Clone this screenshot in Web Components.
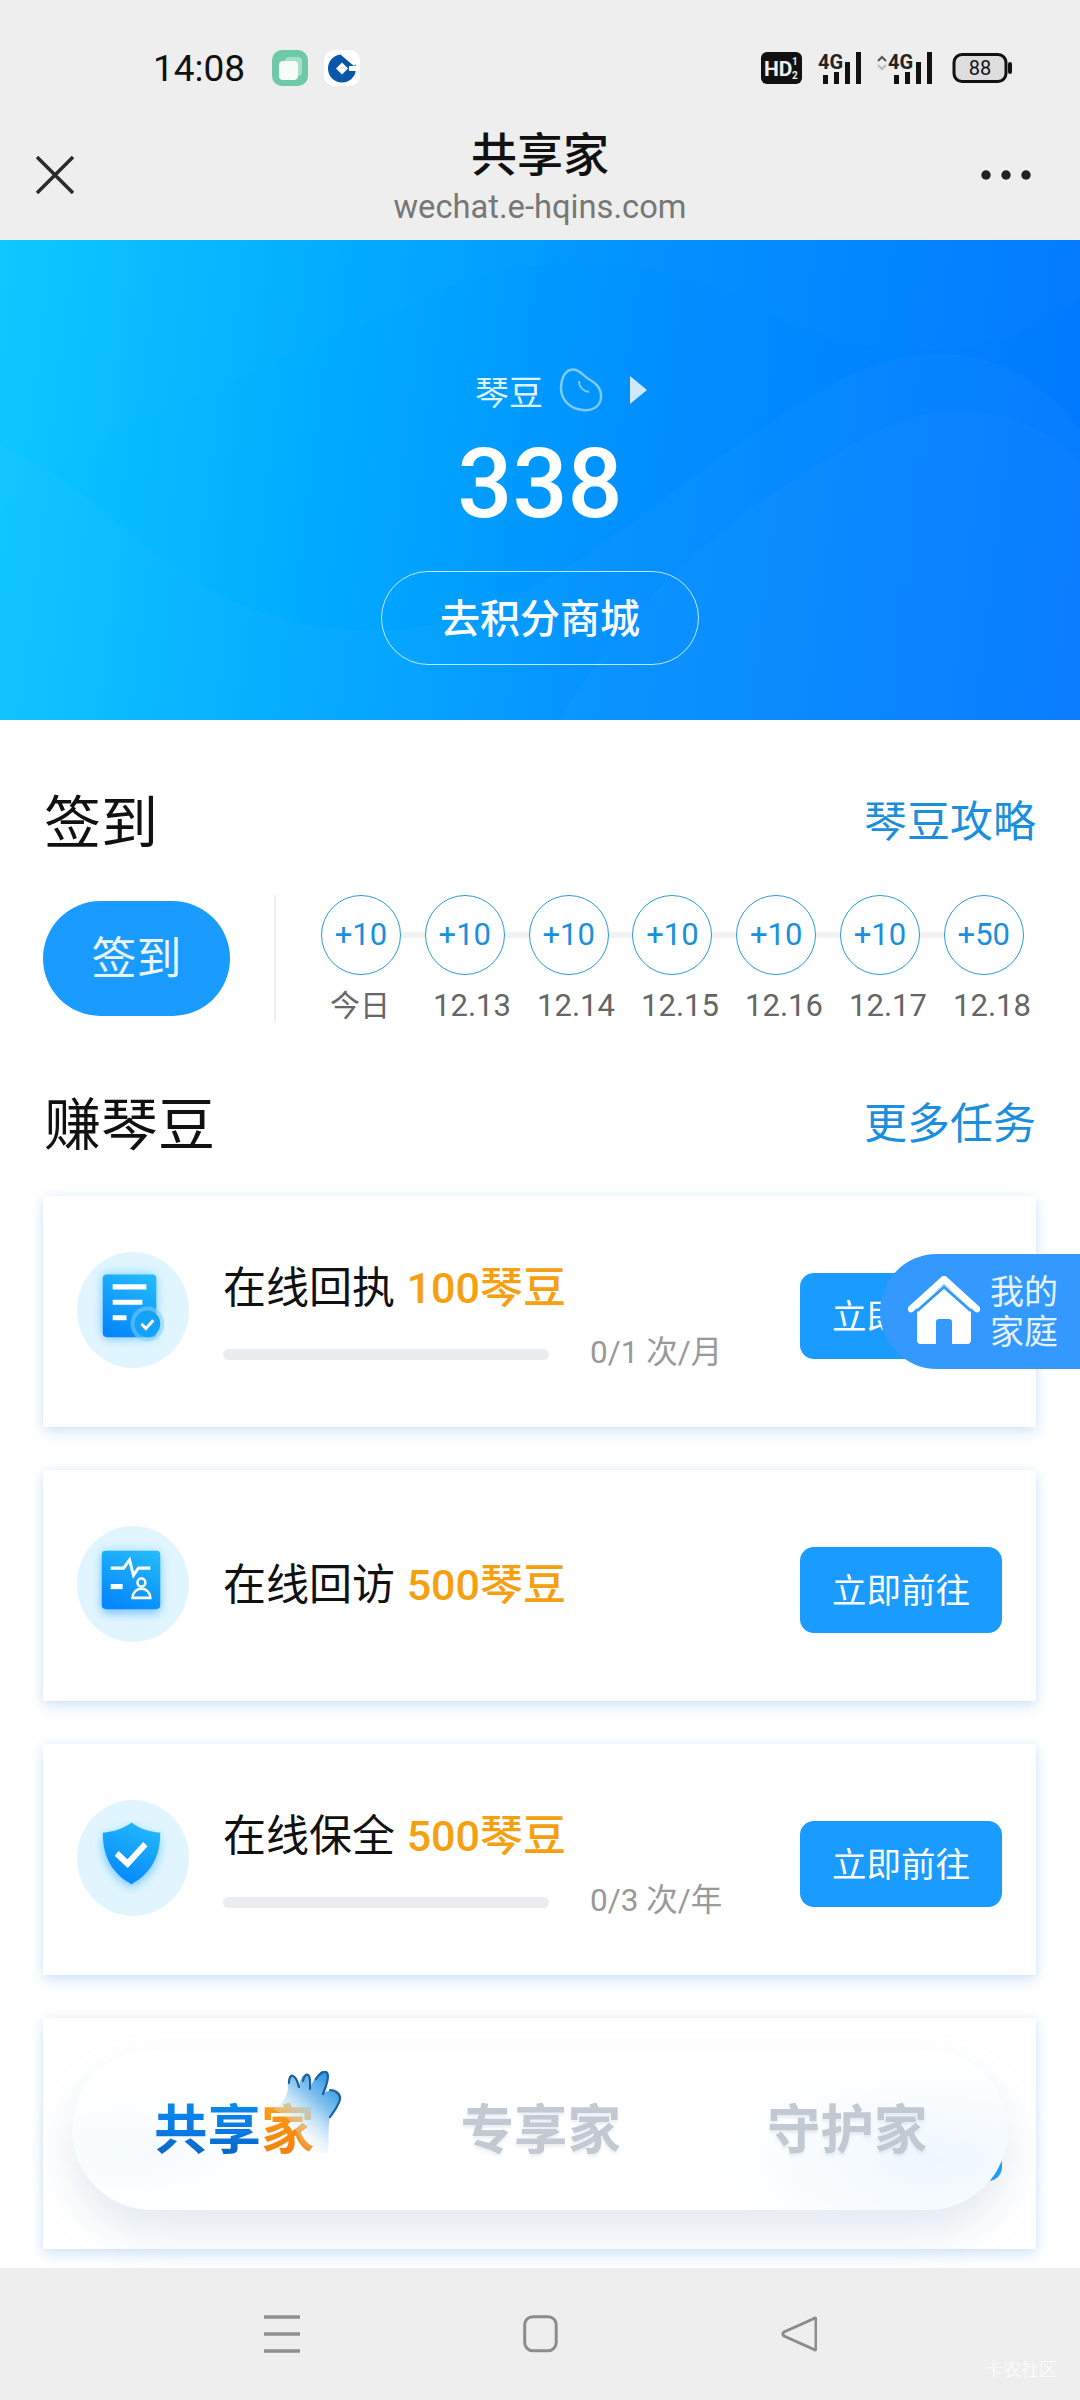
<!DOCTYPE html>
<html lang="zh">
<head>
<meta charset="utf-8">
<title>共享家</title>
<style>
  html, body { margin: 0; padding: 0; background: #fff; }
  body { font-family: Roboto, "Noto Sans CJK SC", sans-serif; color: #000; }
  #page { position: relative; width: 1080px; height: 2400px; overflow: hidden; display: flex; flex-direction: column; }
  #content { flex: 1; min-height: 0; overflow: hidden; background: #fff; }
</style>
</head>
<body>
<div id="page">
  <status-bar time="14:08"></status-bar>
  <nav-header title="共享家" url="wechat.e-hqins.com"></nav-header>
  <bean-hero count="338"></bean-hero>
  <div id="content">
    <section-head label="琴豆攻略" style="--top: 70px">签到</section-head>
    <sign-panel></sign-panel>
    <section-head label="更多任务" style="--top: 70px">赚琴豆</section-head>
    <task-list>
      <task-card icon="doc" name="在线回执" amount="100琴豆" progress="0/1 次/月" action="立即前往"></task-card>
      <task-card icon="visit" name="在线回访" amount="500琴豆" action="立即前往"></task-card>
      <task-card icon="shield" name="在线保全" amount="500琴豆" progress="0/3 次/年" action="立即前往"></task-card>
      <task-card></task-card>
    </task-list>
  </div>
  <system-nav></system-nav>
  <float-home></float-home>
  <tab-pill></tab-pill>
</div>

<script>
// Small helper so every element gets an open shadow root with its own markup
class Base extends HTMLElement {
  constructor() {
    super();
    this.attachShadow({ mode: 'open' });
  }
  attr(name, fallback = '') {
    return this.getAttribute(name) ?? fallback;
  }
}

class StatusBar extends Base {
  connectedCallback() {
    this.shadowRoot.innerHTML = `
      <style>
        :host { display: flex; align-items: center; height: 104px; padding: 16px 68px 0 153px; background: #eee; }
        .time { font-size: 37px; color: #111; width: 119px; }
        .apps { display: flex; gap: 16px; flex: 1; }
        svg { display: block; }
      </style>
      <span class="time">${this.attr('time')}</span>
      <div class="apps">
        <svg width="36" height="36" viewBox="0 0 36 36">
          <rect width="36" height="36" rx="10" fill="#6dc9a6"/>
          <rect x="13" y="7" width="17" height="19" rx="4" fill="#a5e0c8"/>
          <rect x="7" y="11" width="19" height="19" rx="4" fill="#f5fbf8"/>
        </svg>
        <svg width="36" height="36" viewBox="0 0 36 36">
          <rect width="36" height="36" rx="10" fill="#fff"/>
          <circle cx="18" cy="18.500" r="14" fill="#0a56a8"/>
          <path d="M18 12.500l6 6-6 6-6-6z" fill="#fff"/>
          <path d="M20 1l13 12-3 3L17 5z" fill="#fff"/>
          <path d="M25 16h9v5h-9z" fill="#fff"/>
        </svg>
      </div>
      <svg width="251" height="34" viewBox="0 0 251 34">
        <rect x="0" y="1" width="41" height="32" rx="6" fill="#111"/>
        <text x="3" y="25" font-family="Roboto" font-weight="700" font-size="21" fill="#eee">HD</text>
        <text x="31" y="14" font-family="Roboto" font-weight="700" font-size="10" fill="#eee">1</text>
        <text x="31" y="28" font-family="Roboto" font-weight="700" font-size="10" fill="#eee">2</text>
        <text x="57" y="18" font-family="Roboto" font-weight="700" font-size="20" fill="#222">4G</text>
        <g fill="#111"><rect x="62" y="24" width="5" height="9"/><rect x="73" y="21" width="5" height="12"/><rect x="84" y="11" width="5" height="22"/><rect x="95" y="1" width="5" height="32"/></g>
        <path d="M117 10l4-4 4 4" fill="none" stroke="#555" stroke-width="2"/><path d="M117 14l4 4 4-4" fill="none" stroke="#bbb" stroke-width="2"/>
        <text x="127" y="18" font-family="Roboto" font-weight="700" font-size="20" fill="#222">4G</text>
        <g fill="#111"><rect x="133" y="24" width="5" height="9"/><rect x="144" y="21" width="5" height="12"/><rect x="155" y="11" width="5" height="22"/><rect x="166" y="1" width="5" height="32"/></g>
        <rect x="193" y="3.500" width="52" height="27" rx="8" fill="#ddd" stroke="#111" stroke-width="3"/>
        <rect x="247" y="11" width="4" height="12" rx="2" fill="#111"/>
        <text x="219" y="24" text-anchor="middle" font-family="Roboto" font-size="20" fill="#111">88</text>
      </svg>`;
  }
}

class NavHeader extends Base {
  connectedCallback() {
    this.shadowRoot.innerHTML = `
      <style>
        :host { display: grid; grid-template-columns: 110px 1fr 110px; height: 120px; background: #eee; }
        .mid { display: flex; flex-direction: column; align-items: center; padding-top: 10px; }
        .title { font-size: 46px; line-height: 50px; font-weight: 500; color: #111; }
        .url { font-size: 32.700px; line-height: 42px; margin-top: 6px; color: #777; }
        .close { margin: 36px 0 0 36px; }
        .more { margin: 49px 0 0 11px; }
      </style>
      <svg class="close" width="38" height="38" viewBox="0 0 38 38"><path d="M1 1l36 36M37 1L1 37" stroke="#2b2b2b" stroke-width="3.500" fill="none"/></svg>
      <div class="mid"><span class="title">${this.attr('title')}</span><span class="url">${this.attr('url')}</span></div>
      <svg class="more" width="50" height="12" viewBox="0 0 50 12"><circle cx="5" cy="6" r="4.700" fill="#222"/><circle cx="25" cy="6" r="4.700" fill="#222"/><circle cx="45" cy="6" r="4.700" fill="#222"/></svg>`;
  }
}

class BeanHero extends Base {
  connectedCallback() {
    this.shadowRoot.innerHTML = `
      <style>
        :host { display: flex; flex-direction: column; align-items: center; position: relative; height: 480px; overflow: hidden; color: #fff;
          background: linear-gradient(97deg, #0cc8ff 0%, #00acff 30%, #0090ff 58%, #0078ff 100%); }
        .waves { position: absolute; inset: 0; }
        .row, .num, .mall { position: relative; }
        .row { display: flex; align-items: center; height: 44px; margin-top: 128px; margin-left: 42px; color: #dff3ff; font-size: 34px; }
        .bean { margin-left: 16px; }
        .arrow { margin-left: 27px; }
        .num { font-size: 97px; line-height: 100px; font-weight: 500; margin-top: 22px; }
        .mall { display: flex; align-items: center; justify-content: center; box-sizing: border-box; width: 318px; height: 94px; margin-top: 37px; padding-bottom: 4px;
          border: 1px solid #bfe9ff; border-radius: 47px; font-size: 40px; font-weight: 500; }
      </style>
      <svg class="waves" width="1080" height="480" viewBox="0 0 1080 480">
        <path d="M0 270C90 190 290 120 420 60C520 10 660 10 760 70C900 140 1010 110 1080 60V0H0Z" fill="#fff" opacity=".012"/>
        <path d="M0 205C130 260 190 400 390 390C560 380 680 220 860 130C960 90 1040 130 1080 190V480H0Z" fill="#fff" opacity=".022"/>
        <path d="M560 480C640 340 760 250 880 190C960 150 1040 180 1080 220V480Z" fill="#fff" opacity=".02"/>
      </svg>
      <div class="row">
        <span>琴豆</span>
        <svg class="bean" width="44" height="44" viewBox="0 0 44 44"><path d="M11 2C19 0 23 6 28 10C35 14 43 19 42 30C41 39 33 43 24 42C11 41 2 32 2 20C2 12 5 4 11 2Z" fill="none" stroke="#7fcaf7" stroke-width="2.500"/><path d="M20 13C20 19 24 23 30 24" fill="none" stroke="#7fcaf7" stroke-width="2"/></svg>
        <svg class="arrow" width="17" height="28" viewBox="0 0 17 28"><path d="M0 0L17 14L0 28Z" fill="#cfe8fb"/></svg>
      </div>
      <div class="num">${this.attr('count')}</div>
      <div class="mall">去积分商城</div>`;
  }
}

class SectionHead extends Base {
  connectedCallback() {
    this.shadowRoot.innerHTML = `
      <style>
        :host { display: flex; justify-content: space-between; align-items: center; box-sizing: border-box; height: 60px; margin-top: var(--top, 0); padding: 0 44px 5px 44px; }
        .title { font-size: 57px; color: #111; }
        .link { font-size: 43px; color: #1b8fdd; }
      </style>
      <span class="title"><slot></slot></span>
      <span class="link">${this.attr('label')}</span>`;
  }
}

class SignPanel extends Base {
  connectedCallback() {
    const points = ['+10', '+10', '+10', '+10', '+10', '+10', '+50'];
    const days = ['今日', '12.13', '12.14', '12.15', '12.16', '12.17', '12.18'];
    this.shadowRoot.innerHTML = `
      <style>
        :host { display: flex; align-items: center; height: 127px; margin-top: 45px; padding-left: 43px; }
        .btn { display: flex; align-items: center; justify-content: center; box-sizing: border-box; width: 187px; height: 115px; padding-bottom: 6px; border-radius: 58px; background: #1a9bff; color: #eaf6ff; font-size: 45px; }
        .rule { width: 2px; height: 127px; margin: 0 45px 0 44px; background: #f0f0f0; }
        .days { align-self: flex-start; }
        .dots { position: relative; display: flex; gap: 23.800px; }
        .dots::before { content: ""; position: absolute; left: 40px; right: 40px; top: 37px; height: 6px; background: #f2f2f2; }
        .dot { position: relative; display: flex; align-items: center; justify-content: center; box-sizing: border-box; width: 80px; height: 80px; padding-bottom: 2px; border: 1px solid #2b9ad6; border-radius: 50%; background: #fff; color: #1b8fdd; font-size: 31px; }
        .labels { display: flex; gap: 26px; margin-top: 11px; margin-left: 9px; }
        .labels span { width: 78px; line-height: 40px; text-align: center; font-size: 31px; color: #666; }
        .labels span:first-child { width: 60px; margin-right: 17px; font-size: 30px; }
      </style>
      <div class="btn">签到</div>
      <div class="rule"></div>
      <div class="days">
        <div class="dots">${points.map(p => `<div class="dot">${p}</div>`).join('')}</div>
        <div class="labels">${days.map(d => `<span>${d}</span>`).join('')}</div>
      </div>`;
  }
}

class TaskList extends Base {
  connectedCallback() {
    this.shadowRoot.innerHTML = `
      <style>
        :host { display: flex; flex-direction: column; gap: 43px; margin-top: 44px; padding: 0 44px 0 43px; }
      </style>
      <slot></slot>`;
  }
}

const TASK_ICONS = {
  doc: `
    <rect x="26" y="22" width="54" height="61" rx="5" fill="url(#g)" filter="url(#b)" opacity=".55"/>
    <rect x="26" y="22" width="54" height="61" rx="4" fill="url(#g)"/>
    <path d="M36 34h34M36 49h30M36 64h14" stroke="#fff" stroke-width="5"/>
    <circle cx="71" cy="70" r="17" fill="#7fd2ff" opacity=".55"/>
    <circle cx="71" cy="70" r="13" fill="#14a2f7"/>
    <path d="M65 70l4.500 4.500 7.500-8" fill="none" stroke="#fff" stroke-width="3"/>`,
  visit: `
    <rect x="25" y="26" width="59" height="58" rx="5" fill="url(#g)" filter="url(#b)" opacity=".55"/>
    <rect x="25" y="24" width="59" height="57" rx="4" fill="url(#g)"/>
    <path d="M34 41h13l6-8 4 15 5-7h12" fill="none" stroke="#fff" stroke-width="3"/>
    <path d="M34 59h12" stroke="#fff" stroke-width="5"/>
    <circle cx="65" cy="55" r="4" fill="none" stroke="#fff" stroke-width="2.500"/>
    <path d="M56 70c0-5 4-9 9-9s9 4 9 9z" fill="none" stroke="#fff" stroke-width="2.500"/>`,
  shield: `
    <path d="M55 26c8 6 18 9 29 10 0 24-10 38-29 48C36 74 26 60 26 36c11-1 21-4 29-10z" fill="url(#g)" filter="url(#b)" opacity=".55"/>
    <path d="M55 22c8 6 18 9 29 10 0 24-10 40-29 50C36 72 26 56 26 32c11-1 21-4 29-10z" fill="url(#g)"/>
    <path d="M40 52l11 10 18-19" fill="none" stroke="#fff" stroke-width="6"/>`
};

class TaskCard extends Base {
  connectedCallback() {
    const icon = this.attr('icon');
    const progress = this.attr('progress');
    const action = this.attr('action');
    const art = icon ? `
      <svg class="ico" width="112" height="116" viewBox="0 0 113 113" preserveAspectRatio="none">
        <defs>
          <linearGradient id="g" x1="0.7" y1="0" x2="0.3" y2="1"><stop offset="0" stop-color="#22b8fb"/><stop offset="1" stop-color="#0586fb"/></linearGradient>
          <filter id="b" x="-30%" y="-30%" width="160%" height="160%"><feGaussianBlur stdDeviation="5"/></filter>
        </defs>
        <ellipse cx="56.500" cy="56.500" rx="56.500" ry="56.500" fill="#e0f5ff"/>
        ${TASK_ICONS[icon]}
      </svg>
      <div class="info ${progress ? '' : 'solo'}">
        <div class="name">${this.attr('name')} <span>${this.attr('amount')}</span></div>
        ${progress ? `<div class="track"><i></i><em>${progress}</em></div>` : ''}
      </div>` : '<div class="spacer"></div>';
    this.shadowRoot.innerHTML = `
      <style>
        :host { display: flex; box-sizing: border-box; height: 231px; padding: 58px 34px 0 34px; background: #fff;
          box-shadow: 0 6px 14px rgba(70, 150, 230, .2), 0 0 8px rgba(70, 150, 230, .1); }
        .ico { flex: none; margin-top: -2px; }
        .info { flex: 1; margin: 9px 0 0 34px; }
        .info.solo { margin-top: 32px; }
        .spacer { flex: 1; }
        .name { font-size: 43px; line-height: 50px; color: #111; white-space: nowrap; }
        .name span { color: #f5a011; font-weight: 500; margin-left: 1px; }
        .track { display: flex; align-items: center; height: 40px; margin-top: 21px; }
        .track i { display: block; width: 326px; height: 11px; border-radius: 6px; background: #eaedf0; }
        .track em { margin: -10px 0 0 41px; font-style: normal; font-size: 31.500px; color: #999; white-space: nowrap; }
        .go { flex: none; display: flex; align-items: center; justify-content: center; box-sizing: border-box; width: 202px; height: 86px; margin-top: 19px; padding-bottom: 4px; border-radius: 14px; background: #1a9bff; color: #fff; font-size: 34.500px; }
      </style>
      ${art}
      <div class="go">${action}</div>`;
  }
}

class SystemNav extends Base {
  connectedCallback() {
    this.shadowRoot.innerHTML = `
      <style>
        :host { display: flex; position: relative; height: 132px; padding-top: 47px; box-sizing: border-box; background: #eee; }
        svg { display: block; position: relative; }
        .menu { margin-left: 264px; }
        .home { margin-left: 223px; }
        .back { margin-left: 223px; }
        .mark { position: absolute; left: 985px; top: 92px; font-size: 18px; line-height: 20px; color: #fafafa; }
      </style>
      <svg class="menu" width="36" height="38" viewBox="0 0 36 38"><path d="M0 2h36M0 19h36M0 36h36" stroke="#909090" stroke-width="3.500"/></svg>
      <svg class="home" width="35" height="38" viewBox="0 0 35 38"><rect x="1.700" y="1.700" width="31.500" height="34" rx="8" fill="none" stroke="#8c8c8c" stroke-width="3"/></svg>
      <svg class="back" width="36" height="38" viewBox="0 0 36 38"><path d="M33 3.500c1-.8 2-.2 2 1v29c0 1.200-1 1.800-2 1L3 21c-1.500-1.200-1.500-2.800 0-4z" fill="none" stroke="#8c8c8c" stroke-width="3"/></svg>
      <span class="mark">卡农社区</span>`;
  }
}

// Floats over the first card's button, anchored to the right edge of the page
class FloatHome extends Base {
  connectedCallback() {
    this.shadowRoot.innerHTML = `
      <style>
        :host { position: absolute; right: 0; top: 1254px; display: flex; align-items: center; box-sizing: border-box; width: 200px; height: 115px; padding-left: 28px; border-radius: 57px 0 0 57px; background: #3399ff; color: #e6f3ff; font-size: 34px; line-height: 40px; }
        .txt { margin-left: 10px; }
      </style>
      <svg width="72" height="72" viewBox="0 0 72 72">
        <path d="M9 31V64a4 4 0 004 4H28V46a3 3 0 013-3h10a3 3 0 013 3V68H59a4 4 0 004-4V31L36 8Z" fill="#fff"/>
        <path d="M3 33L36 3L69 33" fill="none" stroke="#fff" stroke-width="6.500" stroke-linecap="round" stroke-linejoin="round"/>
        <path d="M9 35L36 11L63 35" fill="none" stroke="#3399ff" stroke-width="3"/>
      </svg>
      <div class="txt">我的<br>家庭</div>`;
  }
}

// Bottom switcher pill that lies over the fourth card
class TabPill extends Base {
  connectedCallback() {
    this.shadowRoot.innerHTML = `
      <style>
        :host { position: absolute; left: 72px; top: 2050px; display: flex; align-items: center; gap: 146px; box-sizing: border-box; width: 936px; height: 160px; padding-left: 82px; border-radius: 80px;
          background: radial-gradient(ellipse 220px 100px at 860px 110px, #eff7fe 0%, rgba(255,255,255,0) 100%), radial-gradient(ellipse 180px 70px at 50px 100px, #f6fbfe 0%, rgba(255,255,255,0) 100%), #fff;
          box-shadow: 0 22px 40px rgba(130, 160, 195, .22); }
        span { position: relative; font-size: 53.500px; line-height: 60px; font-weight: 700; white-space: nowrap; margin-top: 2px; text-shadow: 0 3px 3px rgba(150, 165, 185, .18); }
        .on { text-shadow: none; }
        .on b { font-weight: 700; color: transparent; -webkit-background-clip: text; background-clip: text; }
        .blue { background-image: linear-gradient(180deg, #0b8bf0 0%, #0a78e0 55%, #0860b8 100%); }
        .orange { background-image: linear-gradient(180deg, #f9a21a 0%, #f47a0a 100%); }
        .off { color: #c3c9d3; }
        svg { position: absolute; left: 118px; top: -30px; }
      </style>
      <span class="on"><b class="blue">共享</b><b class="orange">家</b>
        <svg width="70" height="84" viewBox="0 0 70 84">
          <defs>
            <linearGradient id="h" x1="0.85" y1="0.05" x2="0.25" y2="0.85"><stop offset="0" stop-color="#2b93e6"/><stop offset=".4" stop-color="#90c9f0"/><stop offset="1" stop-color="#fff" stop-opacity="0"/></linearGradient>
          </defs>
          <path d="M0 38C8 36 14 28 16 18C15 10 17 4 21 5C25 6 26 12 27 16C28 8 31 2 36 4C39 6 38 12 38 18C41 8 48-1 54 1C58 3 55 14 51 23C56 18 65 18 68 26C69 32 62 40 58 46C56 56 57 66 56 82L30 82C28 60 18 44 0 38Z" fill="url(#h)"/>
          <path d="M17 12C17 6 19 4 21 5C24 6 26 12 27 16M31 10C32 5 34 3 36 4C39 6 38 12 38 18M44 8C48 2 52 0 54 1C58 3 55 14 51 23M58 19C63 19 67 22 68 26C69 32 62 40 58 46" fill="none" stroke="#1d5f98" stroke-width="2.200" stroke-linecap="round"/>
        </svg>
      </span>
      <span class="off">专享家</span>
      <span class="off">守护家</span>`;
  }
}

customElements.define('status-bar', StatusBar);
customElements.define('nav-header', NavHeader);
customElements.define('bean-hero', BeanHero);
customElements.define('section-head', SectionHead);
customElements.define('sign-panel', SignPanel);
customElements.define('task-list', TaskList);
customElements.define('task-card', TaskCard);
customElements.define('system-nav', SystemNav);
customElements.define('float-home', FloatHome);
customElements.define('tab-pill', TabPill);
</script>
</body>
</html>
